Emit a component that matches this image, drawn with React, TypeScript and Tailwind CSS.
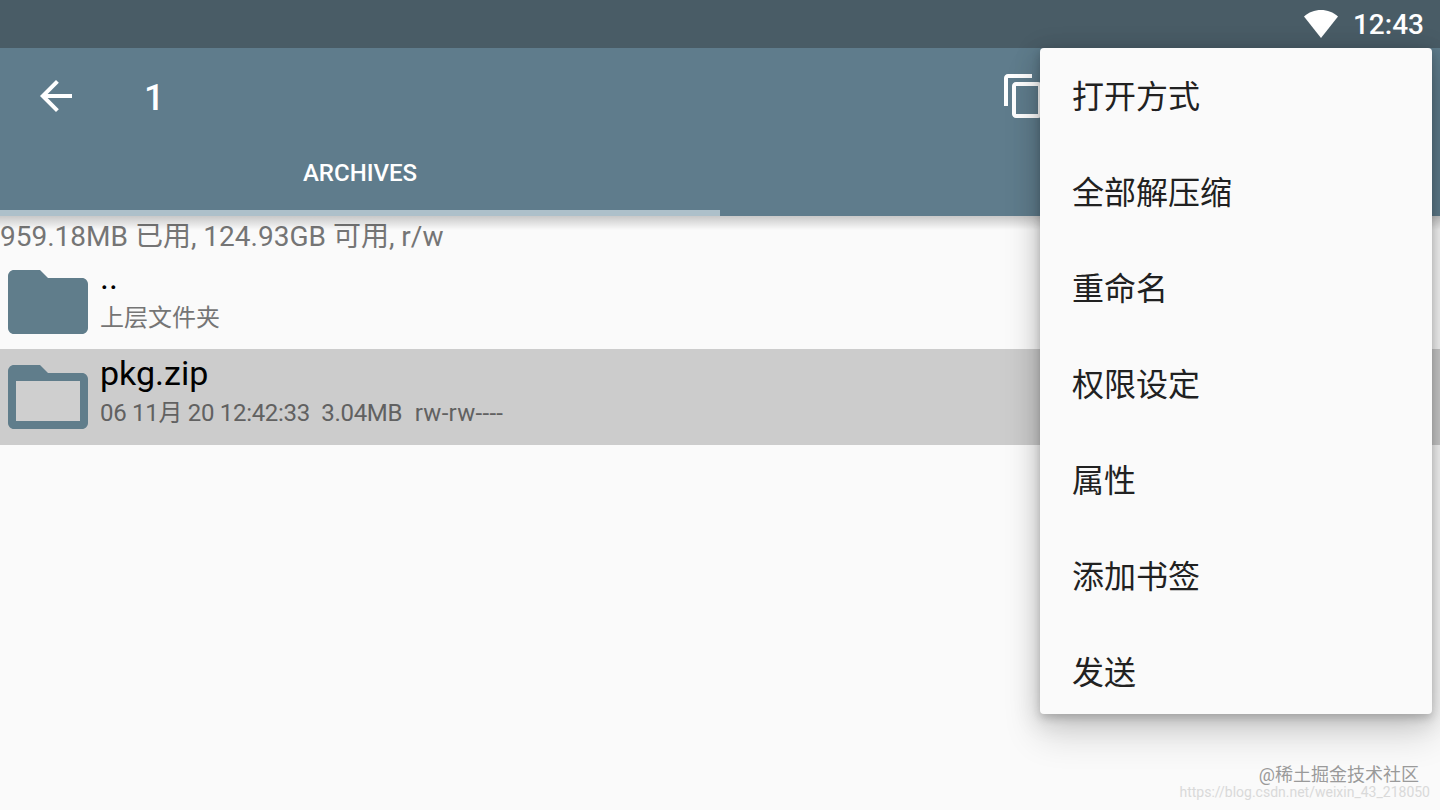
import React from 'react';

const sans = '"Roboto", "Noto Sans CJK SC", sans-serif';

const menuItems = ['打开方式', '全部解压缩', '重命名', '权限设定', '属性', '添加书签', '发送'];

const FolderIcon = ({ open }: { open?: boolean }) => (
  <svg width="80" height="64" viewBox="0 0 80 64" className="shrink-0">
    <path
      d="M6 0H32L40 8H74C77.3 8 80 10.7 80 14V58C80 61.3 77.3 64 74 64H6C2.7 64 0 61.3 0 58V6C0 2.7 2.7 0 6 0Z"
      fill="#607d8b"
    />
    {open && <rect x="8" y="16" width="64" height="40" fill="#cfcfcf" />}
  </svg>
);

const App: React.FC = () => {
  return (
    <div className="relative w-[1440px] h-[810px] overflow-hidden bg-[#fafafa]" style={{ fontFamily: sans }}>
      <div className="h-12 bg-[#495c66] flex items-center justify-end pr-[16px] gap-[15px]">
        <svg width="34" height="28" viewBox="0 0 34 28">
          <path d="M17 28L0 6.4C4.7 2.4 10.5 0 17 0S29.3 2.4 34 6.4Z" fill="#fff" />
        </svg>
        <span className="pt-px text-white text-[28px] font-medium leading-none">12:43</span>
      </div>

      <div className="h-[168px] bg-[#5f7c8c] flex flex-col">
        <div className="h-[96px] flex items-center">
          <svg width="48" height="48" viewBox="0 0 24 24" className="ml-8 shrink-0" fill="#fff">
            <path d="M20 11H7.83l5.59-5.59L12 4l-8 8 8 8 1.41-1.41L7.83 13H20v-2z" />
          </svg>
          <span className="ml-[64px] w-[20px] pt-[4px] text-white text-[36px] font-medium leading-none">1</span>
          <svg width="48" height="48" viewBox="0 0 24 24" className="ml-[836px] shrink-0" fill="#fff">
            <path d="M16 1H4c-1.1 0-2 .9-2 2v14h2V3h12V1zm3 4H8c-1.1 0-2 .9-2 2v14c0 1.1.9 2 2 2h11c1.1 0 2-.9 2-2V7c0-1.1-.9-2-2-2zm0 16H8V7h11v14z" />
          </svg>
        </div>
        <div className="flex-1 flex flex-col">
          <div className="flex-1 w-[720px] flex items-center justify-center pb-2">
            <span className="text-white text-[24px] font-medium leading-none">ARCHIVES</span>
          </div>
          <div className="h-[6px] w-[720px] bg-[#adc0ca]" />
        </div>
      </div>

      <div className="relative">
        <div className="absolute inset-x-0 top-0 h-[14px] bg-gradient-to-b from-black/20 to-transparent" />
        <div className="h-[37px] pt-[3px] text-[#757575] text-[28px] leading-[36px]">
          959.18MB 已用, 124.93GB 可用, r/w
        </div>
        <div className="h-[96px] flex items-center pl-2 gap-3">
          <div className="pt-[2px]">
            <FolderIcon />
          </div>
          <div className="flex flex-col self-start pt-[4px]">
            <span className="text-black text-[34px] leading-[40px]">..</span>
            <span className="mt-[5px] text-[#757575] text-[24px] leading-[32px]">上层文件夹</span>
          </div>
        </div>
        <div className="h-[96px] flex items-center pl-2 gap-3 bg-[#cccccc]">
          <FolderIcon open />
          <div className="flex flex-col self-start pt-[4px]">
            <span className="text-black text-[34px] leading-[40px]">pkg.zip</span>
            <span className="mt-[4px] text-[#616161] text-[24px] leading-[32px]">
              <span className="tracking-[-0.3px]">06 11月 20 12:42:33&nbsp;&nbsp;3.04MB</span>
              <span className="tracking-[0.3px]">&nbsp;&nbsp;rw-rw----</span>
            </span>
          </div>
        </div>
      </div>

      <div className="absolute left-[1040px] top-12 w-[392px] h-[666px] bg-[#fafafa] rounded-[4px] shadow-[0_4px_8px_rgba(0,0,0,0.18),0_20px_36px_2px_rgba(0,0,0,0.14),0_4px_24px_4px_rgba(0,0,0,0.12)] flex flex-col pt-px">
        {menuItems.map((item) => (
          <div key={item} className="h-[96px] shrink-0 flex items-center pl-[32px] text-[#212121] text-[32px] leading-none">
            {item}
          </div>
        ))}
      </div>

      <div className="absolute right-[21px] top-[766px] text-[#9a9a9a] text-[18px] leading-none">@稀土掘金技术社区</div>
      <div className="absolute right-[10px] top-[785px] text-[#d9d9d9] text-[14px] leading-none">https://blog.csdn.net/weixin_43_218050</div>
    </div>
  );
};

export default App;
